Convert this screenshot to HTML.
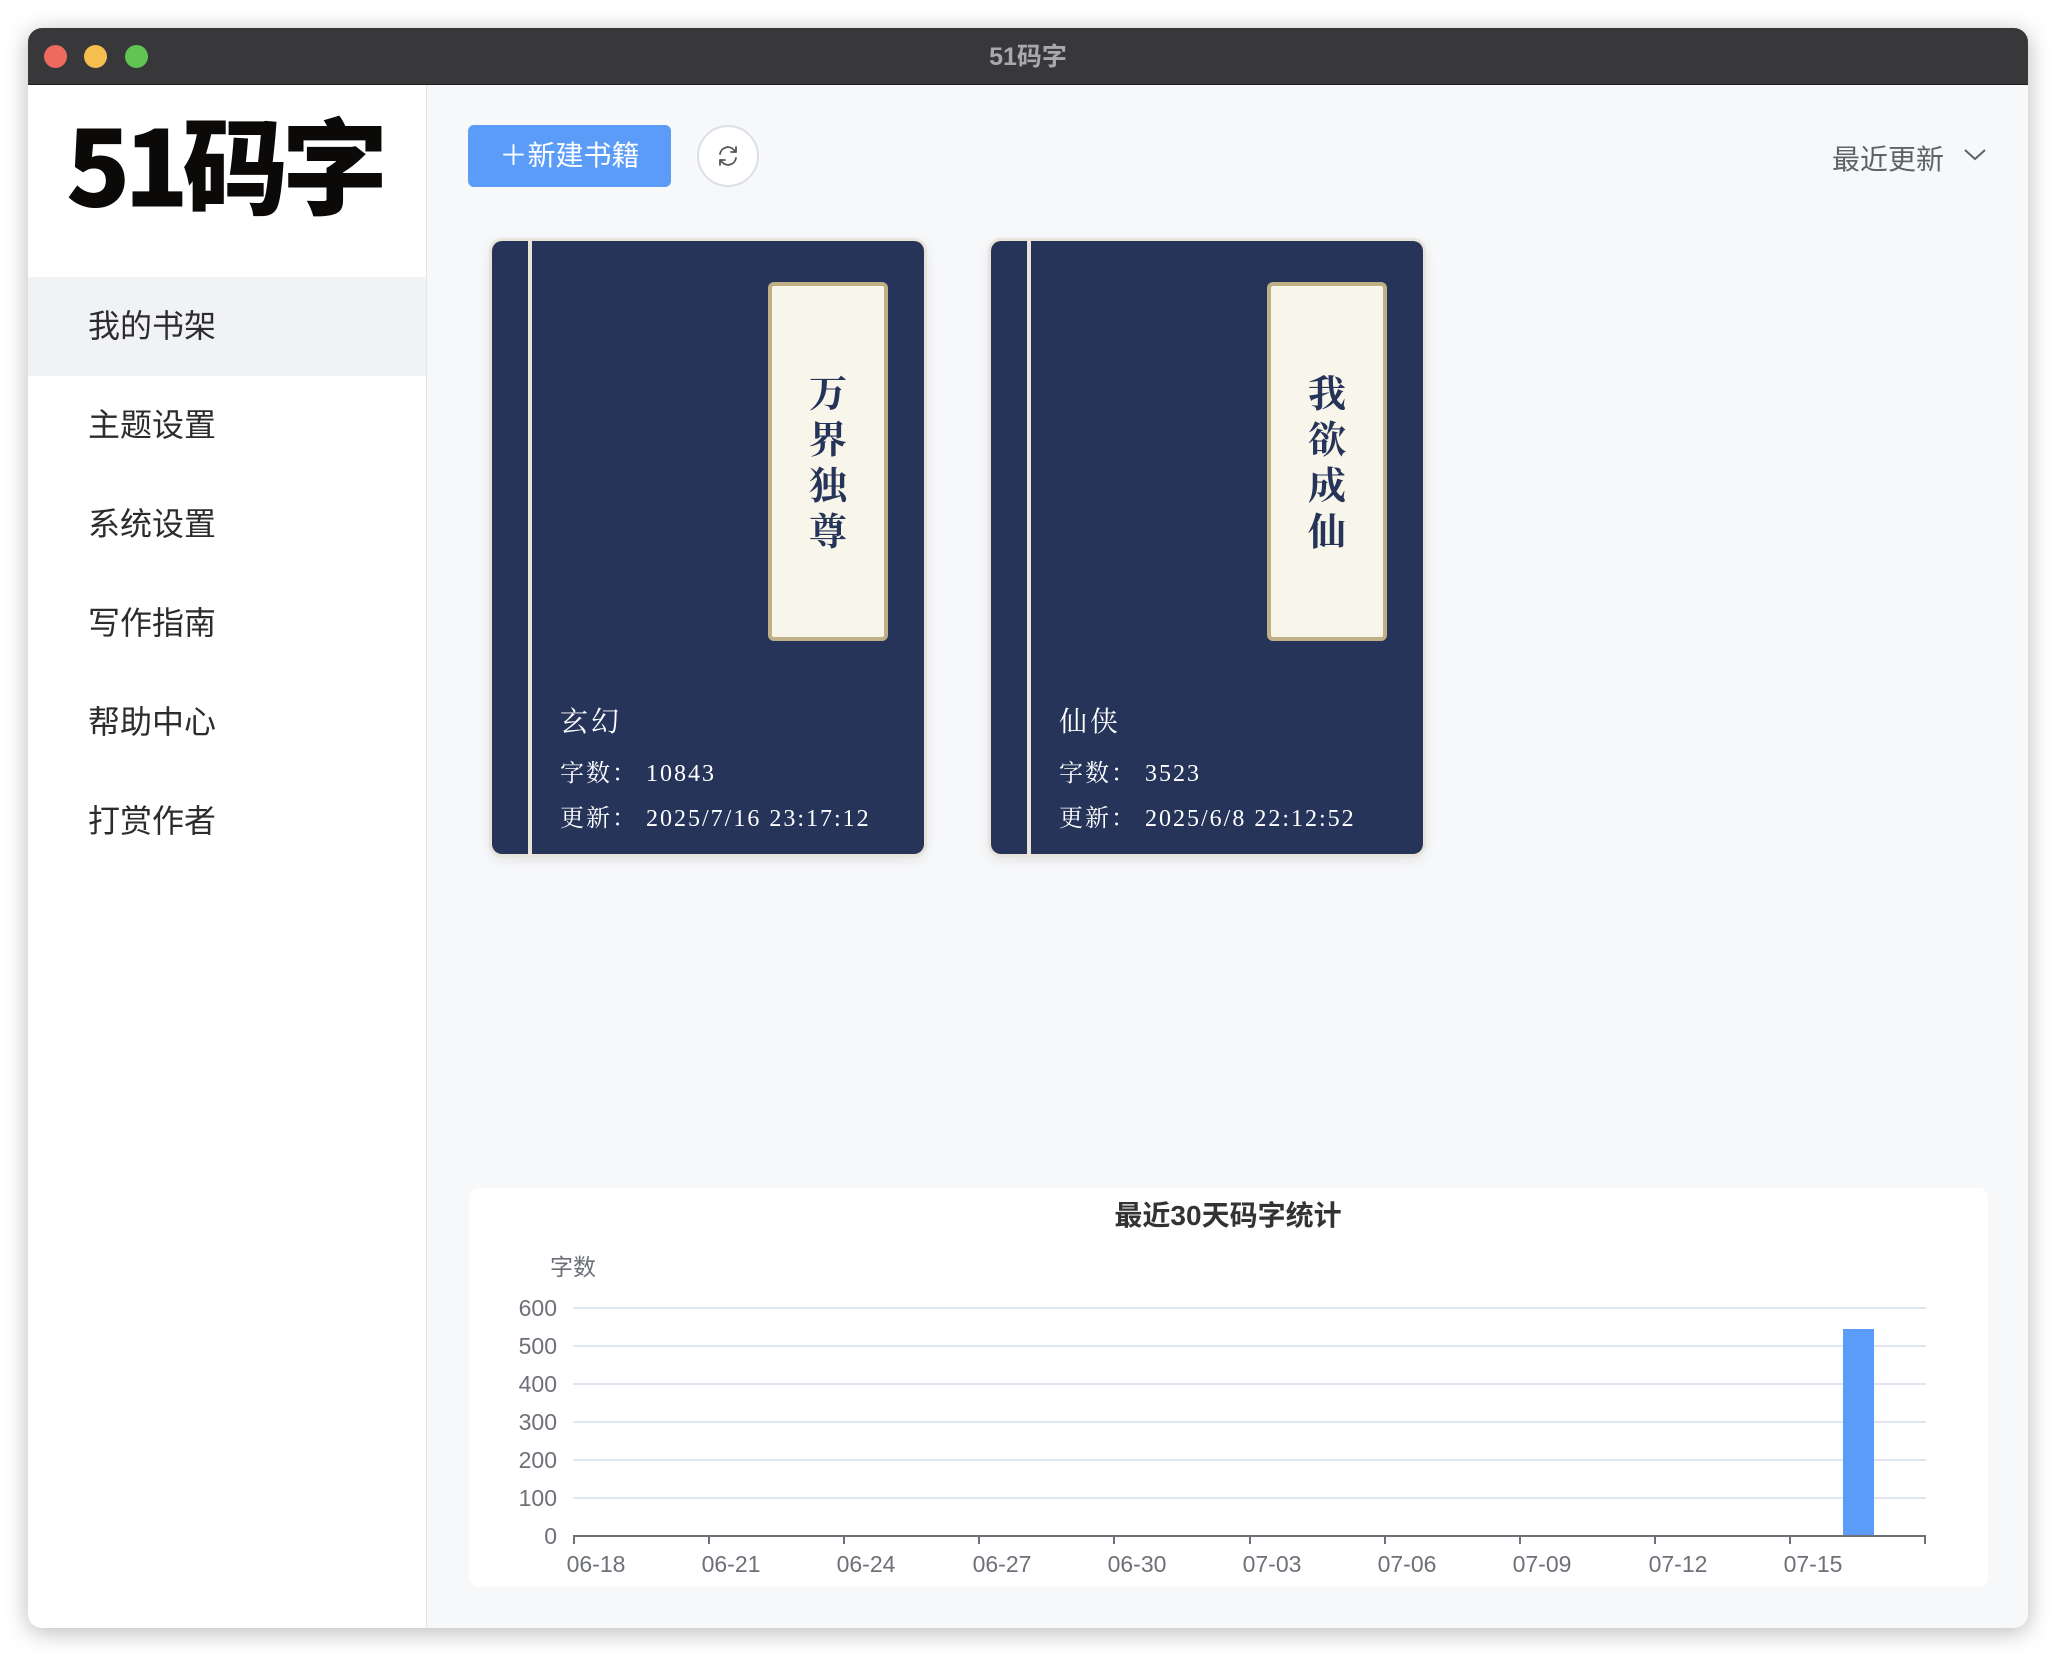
<!DOCTYPE html>
<html><head><meta charset="utf-8"><style>
*{margin:0;padding:0;box-sizing:border-box}
body{width:2056px;height:1656px;background:#fff;position:relative;overflow:hidden;font-family:"Liberation Sans","Noto Sans CJK SC",sans-serif}
.win{position:absolute;left:28px;top:28px;width:2000px;height:1600px;border-radius:14px;overflow:hidden;box-shadow:0 4px 24px rgba(0,0,0,.28);background:#f7f8fa}
.tb{position:absolute;left:0;top:0;width:2000px;height:57px;background:#38383a;border-bottom:1px solid #1e1e1e}
.dot{position:absolute;top:17px;width:23px;height:23px;border-radius:50%}
.tt{position:absolute;left:0;right:0;top:9px;text-align:center;color:#a9a9ab;font-size:25px;font-weight:bold}
.side{position:absolute;left:0;top:57px;width:399px;height:1543px;background:#fff;border-right:1px solid #e3e5ea}
.logo{position:absolute;left:38px;top:24px;font-family:"Noto Sans CJK SC",sans-serif;font-weight:900;font-size:100px;color:#0b0a08;letter-spacing:-6px;transform:scale(1.06,1.05);transform-origin:left top;line-height:1}
.mi{position:absolute;left:0;width:398px;height:99px;line-height:99px;padding-left:60px;font-size:32px;color:#2c2c2e}
.mi.a{background:#f1f2f4}
.btn{position:absolute;left:440px;top:97px;width:203px;height:62px;background:#5b9cf8;border-radius:6px;color:#fff;font-size:28px;line-height:62px;text-align:center}
.rf{position:absolute;left:669px;top:97px;width:62px;height:62px;border-radius:50%;border:2px solid #dcdfe6;background:#fff}
.sort{position:absolute;left:1804px;top:110px;font-size:28px;color:#606266}
.card{position:absolute;top:213px;width:432px;height:613px;background:#263459;border-radius:10px;box-shadow:0 0 0 3px #e8e4da,0 4px 14px rgba(0,0,0,.12)}
.spine{position:absolute;left:36px;top:0;width:4px;height:100%;background:#e8e4da}
.lab{position:absolute;left:276px;top:41px;width:120px;height:359px;background:#f8f6ea;border:4px solid #bfb085;border-radius:6px}
.lt{position:absolute;left:0;right:0;text-align:center;font-family:"Noto Serif CJK SC",serif;font-weight:bold;font-size:38px;line-height:46px;color:#263459}
.g{position:absolute;left:68px;top:459px;font-family:"Liberation Serif","Noto Serif CJK SC",serif;color:#fff;font-size:28px;letter-spacing:3px}
.i{position:absolute;left:68px;font-family:"Liberation Serif","Noto Serif CJK SC",serif;color:#fff;font-size:24px;letter-spacing:2px}
.chart{position:absolute;left:441px;top:1160px;width:1519px;height:399px;background:#fff;border-radius:10px}
</style></head><body>
<div class="win">
 <div class="tb">
  <div class="dot" style="left:16px;background:#ee6a5f"></div>
  <div class="dot" style="left:56px;background:#f5be4f"></div>
  <div class="dot" style="left:97px;background:#61c554"></div>
  <div class="tt">51码字</div>
 </div>
 <div class="side">
  <div class="logo">51码字</div>
  <div class="mi a" style="top:192px">我的书架</div>
  <div class="mi" style="top:291px">主题设置</div>
  <div class="mi" style="top:390px">系统设置</div>
  <div class="mi" style="top:489px">写作指南</div>
  <div class="mi" style="top:588px">帮助中心</div>
  <div class="mi" style="top:687px">打赏作者</div>
 </div>
 <div class="btn">＋新建书籍</div>
 <div class="rf"><svg width="58" height="58" viewBox="0 0 58 58" style="position:absolute;left:0;top:0"><path d="M21 27a8 8 0 0 1 14-4l2 2M37 31a8 8 0 0 1-14 4l-2-2M37 20v5h-5M21 38v-5h5" fill="none" stroke="#555" stroke-width="1.8" stroke-linecap="round" stroke-linejoin="round"/></svg></div>
 <div class="sort">最近更新<svg width="24" height="14" viewBox="0 0 24 14" style="position:absolute;left:131px;top:10px"><path d="M2 2l10 9 10-9" fill="none" stroke="#606266" stroke-width="2"/></svg></div>

 <div class="card" style="left:464px">
  <div class="spine"></div>
  <div class="lab"><div class="lt" style="top:82px">万<br>界<br>独<br>尊</div></div>
  <div class="g">玄幻</div>
  <div class="i" style="top:512px">字数： 10843</div>
  <div class="i" style="top:557px">更新： 2025/7/16 23:17:12</div>
 </div>
 <div class="card" style="left:963px">
  <div class="spine"></div>
  <div class="lab"><div class="lt" style="top:82px">我<br>欲<br>成<br>仙</div></div>
  <div class="g">仙侠</div>
  <div class="i" style="top:512px">字数： 3523</div>
  <div class="i" style="top:557px">更新： 2025/6/8 22:12:52</div>
 </div>

 <div class="chart">
  <svg width="1519" height="399" viewBox="0 0 1519 399" style="position:absolute;left:0;top:0" font-family="Liberation Sans,Noto Sans CJK SC,sans-serif">
   <text x="759" y="37" text-anchor="middle" font-size="28" font-weight="bold" fill="#333">最近30天码字统计</text>
   <text x="104" y="87" text-anchor="middle" font-size="23" fill="#6e7079">字数</text>
   <g stroke="#e0e6f1" stroke-width="2">
    <line x1="104" x2="1457" y1="120" y2="120"/><line x1="104" x2="1457" y1="158" y2="158"/>
    <line x1="104" x2="1457" y1="196" y2="196"/><line x1="104" x2="1457" y1="234" y2="234"/>
    <line x1="104" x2="1457" y1="272" y2="272"/><line x1="104" x2="1457" y1="310" y2="310"/>
   </g>
   <g font-size="23" fill="#6e7079" text-anchor="end">
    <text x="88" y="128">600</text><text x="88" y="166">500</text><text x="88" y="204">400</text>
    <text x="88" y="242">300</text><text x="88" y="280">200</text><text x="88" y="318">100</text><text x="88" y="356">0</text>
   </g>
   <rect x="1374" y="141" width="31" height="207" fill="#5b9cf8"/>
   <line x1="104" x2="1457" y1="348" y2="348" stroke="#6e7079" stroke-width="2"/>
   <g stroke="#6e7079" stroke-width="2">
    <line x1="105" x2="105" y1="348" y2="356"/><line x1="240" x2="240" y1="348" y2="356"/><line x1="375" x2="375" y1="348" y2="356"/>
    <line x1="510" x2="510" y1="348" y2="356"/><line x1="645" x2="645" y1="348" y2="356"/><line x1="781" x2="781" y1="348" y2="356"/>
    <line x1="916" x2="916" y1="348" y2="356"/><line x1="1051" x2="1051" y1="348" y2="356"/><line x1="1186" x2="1186" y1="348" y2="356"/>
    <line x1="1321" x2="1321" y1="348" y2="356"/><line x1="1456" x2="1456" y1="348" y2="356"/>
   </g>
   <g font-size="23" fill="#6e7079" text-anchor="middle">
    <text x="127" y="384">06-18</text><text x="262" y="384">06-21</text><text x="397" y="384">06-24</text>
    <text x="533" y="384">06-27</text><text x="668" y="384">06-30</text><text x="803" y="384">07-03</text>
    <text x="938" y="384">07-06</text><text x="1073" y="384">07-09</text><text x="1209" y="384">07-12</text><text x="1344" y="384">07-15</text>
   </g>
  </svg>
 </div>
</div>
</body></html>
